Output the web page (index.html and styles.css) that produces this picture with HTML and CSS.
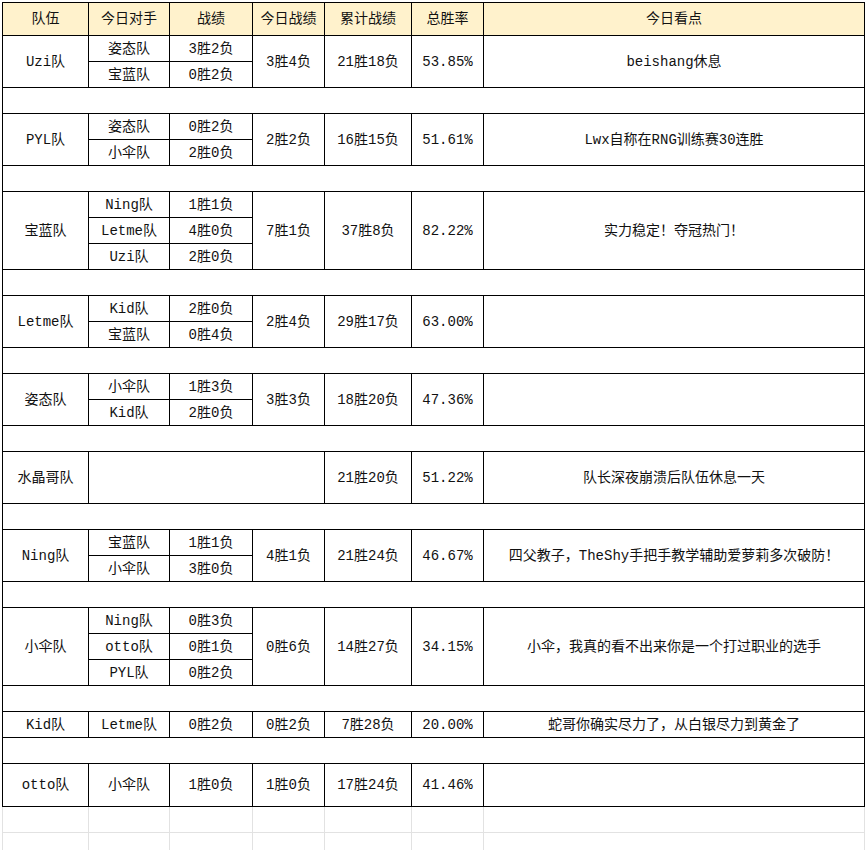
FILE: index.html
```html
<!DOCTYPE html>
<html lang="zh">
<head>
<meta charset="utf-8">
<title>战绩表</title>
<link rel="stylesheet" href="styles.css">
</head>
<body>
<div class="sheet">
<table class="grid">
  <colgroup>
    <col class="c1"><col class="c2"><col class="c3"><col class="c4"><col class="c5"><col class="c6"><col class="c7">
  </colgroup>
  <tr class="head">
    <th>队伍</th><th>今日对手</th><th>战绩</th><th>今日战绩</th><th>累计战绩</th><th>总胜率</th><th>今日看点</th>
  </tr>

  <tr class="sub"><td rowspan="2">Uzi队</td><td>姿态队</td><td>3胜2负</td><td rowspan="2">3胜4负</td><td rowspan="2">21胜18负</td><td rowspan="2">53.85%</td><td rowspan="2">beishang休息</td></tr>
  <tr class="sub"><td>宝蓝队</td><td>0胜2负</td></tr>
  <tr class="gap"><td colspan="7"></td></tr>

  <tr class="sub"><td rowspan="2">PYL队</td><td>姿态队</td><td>0胜2负</td><td rowspan="2">2胜2负</td><td rowspan="2">16胜15负</td><td rowspan="2">51.61%</td><td rowspan="2">Lwx自称在RNG训练赛30连胜</td></tr>
  <tr class="sub"><td>小伞队</td><td>2胜0负</td></tr>
  <tr class="gap"><td colspan="7"></td></tr>

  <tr class="sub"><td rowspan="3">宝蓝队</td><td>Ning队</td><td>1胜1负</td><td rowspan="3">7胜1负</td><td rowspan="3">37胜8负</td><td rowspan="3">82.22%</td><td rowspan="3">实力稳定！夺冠热门！</td></tr>
  <tr class="sub"><td>Letme队</td><td>4胜0负</td></tr>
  <tr class="sub"><td>Uzi队</td><td>2胜0负</td></tr>
  <tr class="gap"><td colspan="7"></td></tr>

  <tr class="sub"><td rowspan="2">Letme队</td><td>Kid队</td><td>2胜0负</td><td rowspan="2">2胜4负</td><td rowspan="2">29胜17负</td><td rowspan="2">63.00%</td><td rowspan="2"></td></tr>
  <tr class="sub"><td>宝蓝队</td><td>0胜4负</td></tr>
  <tr class="gap"><td colspan="7"></td></tr>

  <tr class="sub"><td rowspan="2">姿态队</td><td>小伞队</td><td>1胜3负</td><td rowspan="2">3胜3负</td><td rowspan="2">18胜20负</td><td rowspan="2">47.36%</td><td rowspan="2"></td></tr>
  <tr class="sub"><td>Kid队</td><td>2胜0负</td></tr>
  <tr class="gap"><td colspan="7"></td></tr>

  <tr class="sub"><td rowspan="2">水晶哥队</td><td rowspan="2" colspan="3"></td><td rowspan="2">21胜20负</td><td rowspan="2">51.22%</td><td rowspan="2">队长深夜崩溃后队伍休息一天</td></tr>
  <tr class="sub"></tr>
  <tr class="gap"><td colspan="7"></td></tr>

  <tr class="sub"><td rowspan="2">Ning队</td><td>宝蓝队</td><td>1胜1负</td><td rowspan="2">4胜1负</td><td rowspan="2">21胜24负</td><td rowspan="2">46.67%</td><td rowspan="2">四父教子，TheShy手把手教学辅助爱萝莉多次破防！</td></tr>
  <tr class="sub"><td>小伞队</td><td>3胜0负</td></tr>
  <tr class="gap"><td colspan="7"></td></tr>

  <tr class="sub"><td rowspan="3">小伞队</td><td>Ning队</td><td>0胜3负</td><td rowspan="3">0胜6负</td><td rowspan="3">14胜27负</td><td rowspan="3">34.15%</td><td rowspan="3">小伞，我真的看不出来你是一个打过职业的选手</td></tr>
  <tr class="sub"><td>otto队</td><td>0胜1负</td></tr>
  <tr class="sub"><td>PYL队</td><td>0胜2负</td></tr>
  <tr class="gap"><td colspan="7"></td></tr>

  <tr class="sub"><td>Kid队</td><td>Letme队</td><td>0胜2负</td><td>0胜2负</td><td>7胜28负</td><td>20.00%</td><td>蛇哥你确实尽力了，从白银尽力到黄金了</td></tr>
  <tr class="gap"><td colspan="7"></td></tr>

  <tr class="tall"><td>otto队</td><td>小伞队</td><td>1胜0负</td><td>1胜0负</td><td>17胜24负</td><td>41.46%</td><td></td></tr>

  <tr class="blank"><td></td><td></td><td></td><td></td><td></td><td></td><td></td></tr>
  <tr class="blank"><td></td><td></td><td></td><td></td><td></td><td></td><td></td></tr>
</table>
</div>
</body>
</html>
```

FILE: styles.css
```css
html, body {
  margin: 0;
  padding: 0;
  background: #ffffff;
}

.sheet {
  padding: 2px 0 0 2px;
}

.grid {
  border-collapse: collapse;
  table-layout: fixed;
  width: 862px;
  font-family: "Liberation Mono", "Noto Sans CJK SC", monospace;
  font-size: 14px;
  line-height: 16px;
  color: #111;
}

.c1 { width: 86px; }
.c2 { width: 81px; }
.c3 { width: 83px; }
.c4 { width: 72px; }
.c5 { width: 87px; }
.c6 { width: 72px; }
.c7 { width: 381px; }

.grid th,
.grid td {
  border: 1px solid #000;
  padding: 0;
  text-align: center;
  vertical-align: middle;
  font-weight: normal;
  white-space: nowrap;
  overflow: hidden;
}

.head {
  height: 33px;
}

.head th {
  background: #fff2cc;
}

.sub,
.gap,
.blank {
  height: 26px;
}

.tall {
  height: 43px;
}

.blank td {
  border: 1px solid #e2e2e2;
  border-top-color: #000;
}

.blank + .blank td {
  border-top-color: #e2e2e2;
}
```
